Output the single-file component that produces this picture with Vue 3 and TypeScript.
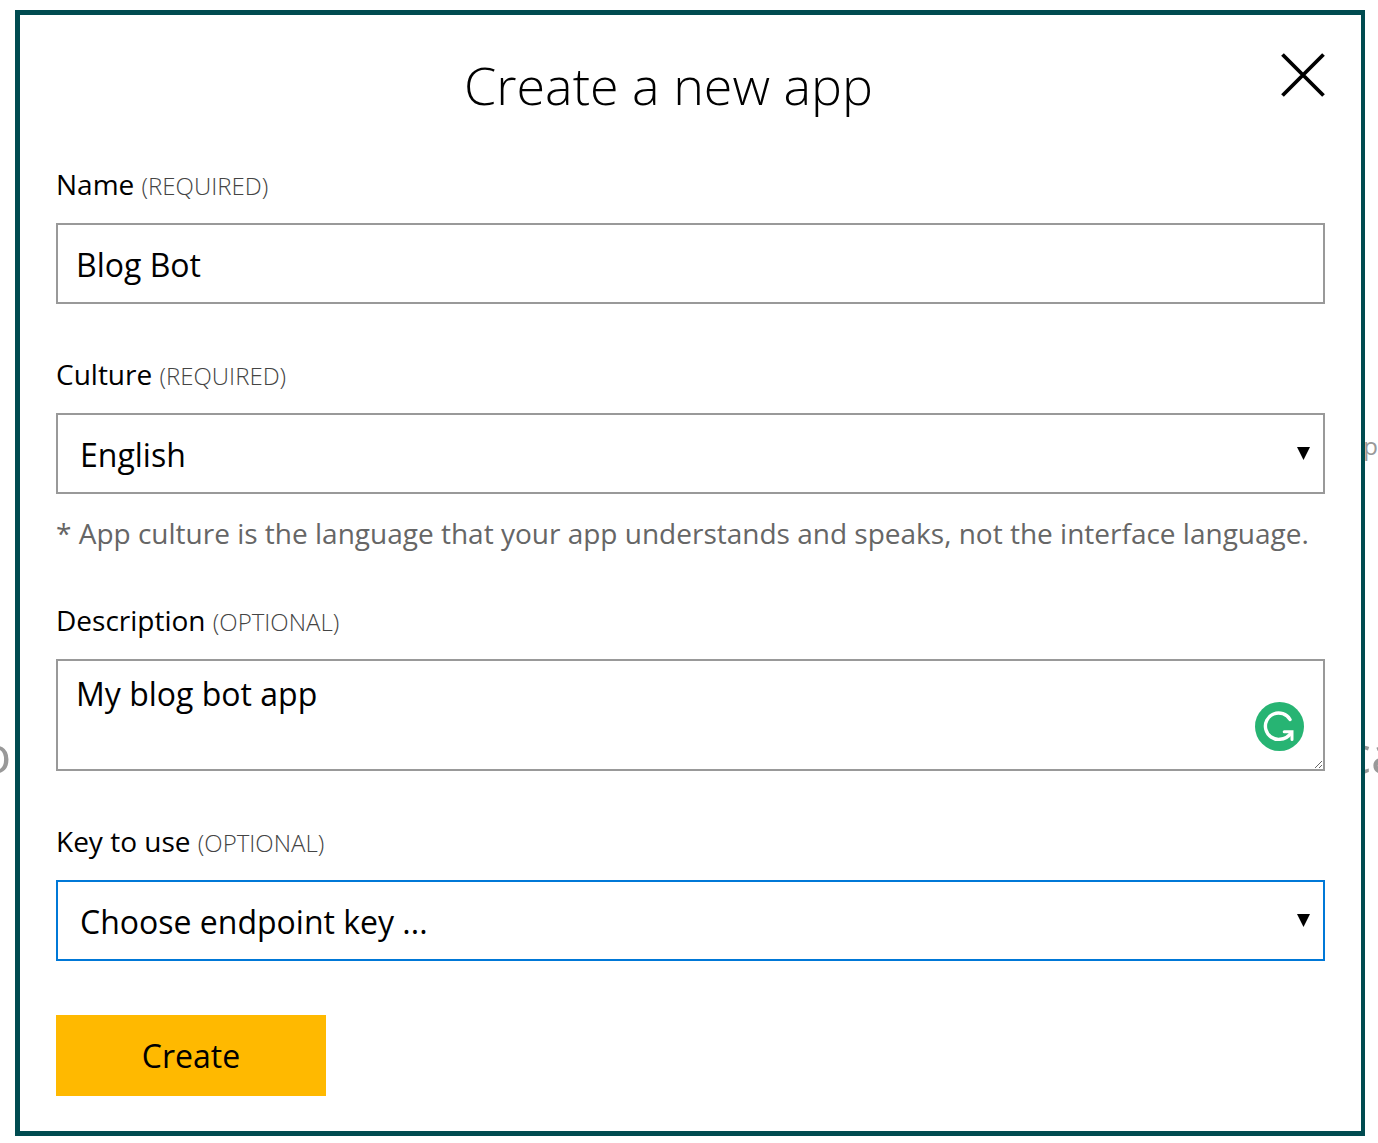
<script setup lang="ts">
import { ref } from 'vue'

const name = ref('Blog Bot')
const culture = ref('en')
const description = ref('My blog bot app')
const endpointKey = ref('')
</script>

<template>
  <div class="page">
    <div class="backdrop" aria-hidden="true">
      <span class="behind behind-column">p</span>
      <span class="behind behind-left">o</span>
      <span class="behind behind-right">ca</span>
    </div>

    <form class="dialog" role="dialog" aria-labelledby="dialog-title" @submit.prevent>
      <header class="header">
        <h1 id="dialog-title" class="title">Create a new app</h1>
        <button type="button" class="close" aria-label="Close">
          <svg viewBox="0 0 44 44" width="44" height="44">
            <path d="M1.500 1.500 42.500 42.500M42.500 1.500 1.500 42.500" stroke="#000" stroke-width="3.800" fill="none" />
          </svg>
        </button>
      </header>

      <div class="field">
        <label class="label" for="name">Name <small>(REQUIRED)</small></label>
        <input id="name" v-model="name" class="control" type="text" />
      </div>

      <div class="field with-note">
        <label class="label" for="culture">Culture <small>(REQUIRED)</small></label>
        <div class="select">
          <select id="culture" v-model="culture" class="control">
            <option value="en">English</option>
          </select>
          <svg class="arrow" viewBox="0 0 13 13" width="13" height="13"><path d="M0 0H13L6.500 13Z" /></svg>
        </div>
        <p class="note">* App culture is the language that your app understands and speaks, not the interface language.</p>
      </div>

      <div class="field">
        <label class="label" for="description">Description <small>(OPTIONAL)</small></label>
        <div class="area">
          <textarea id="description" v-model="description" class="control" spellcheck="false"></textarea>
          <svg class="checker" viewBox="0 0 49 49" width="49" height="49">
            <circle cx="24.500" cy="24.500" r="24.500" fill="#27b473" />
            <path d="M35 17.500A13.200 13.200 0 1 0 25 37.300Q32 37 36 31" fill="none" stroke="#fff" stroke-width="3.400" stroke-linecap="round" />
            <path d="M29.200 29.700H37V37.500" fill="none" stroke="#fff" stroke-width="3" stroke-linecap="round" />
          </svg>
        </div>
      </div>

      <div class="field">
        <label class="label" for="key">Key to use <small>(OPTIONAL)</small></label>
        <div class="select">
          <select id="key" v-model="endpointKey" class="control active">
            <option value="">Choose endpoint key ...</option>
          </select>
          <svg class="arrow" viewBox="0 0 13 13" width="13" height="13"><path d="M0 0H13L6.500 13Z" /></svg>
        </div>
      </div>

      <button type="submit" class="create">Create</button>
    </form>
  </div>
</template>

<style>
body {
  margin: 0;
  background: #fff;
}
</style>

<style scoped>
.page {
  position: relative;
  min-height: 100vh;
  box-sizing: border-box;
  padding: 10px 13px 7px 15px;
  overflow: hidden;
  font-family: "Open Sans", "Noto Sans", sans-serif;
  color: #000;
}

.backdrop {
  position: absolute;
  inset: 0;
  color: #999;
}

.behind {
  position: absolute;
  white-space: nowrap;
}

.behind-column {
  top: 430px;
  right: 0;
  font-size: 24px;
  line-height: 32px;
}

.behind-left {
  top: 718px;
  left: -20px;
  font-size: 52px;
  line-height: 70px;
}

.behind-right {
  top: 718px;
  left: calc(100% - 32px);
  font-size: 52px;
  line-height: 70px;
}

.dialog {
  position: relative;
  box-sizing: border-box;
  padding: 36px 36px 35px;
  border: 5px solid #004b50;
  border-right-width: 4px;
  background: #fff;
}

.header {
  display: flex;
  align-items: flex-start;
  margin-bottom: 46px;
}

.title {
  flex: 1;
  margin: 0;
  font-size: 52px;
  line-height: 68px;
  font-weight: 300;
  text-align: center;
}

.close {
  padding: 2px 0 0;
  border: 0;
  background: none;
}

.close svg {
  display: block;
}

.field {
  margin-bottom: 51px;
}

.with-note {
  margin-bottom: 48px;
}

.label {
  display: block;
  margin-bottom: 20px;
  font-size: 28px;
  line-height: 38px;
}

.label small {
  font-size: 24px;
  line-height: 24px;
  font-weight: 300;
  color: #444;
}

.control {
  display: block;
  box-sizing: border-box;
  width: 100%;
  height: 81px;
  margin: 0;
  padding: 2px 18px 0;
  border: 2px solid #999;
  border-radius: 0;
  outline: 0;
  background: #fff;
  color: #000;
  font-family: inherit;
  font-size: 32px;
  line-height: 44px;
}

.select,
.area {
  position: relative;
}

select.control {
  padding: 2px 22px 0;
  appearance: none;
}

.active {
  border-color: #0078d7;
}

.arrow {
  position: absolute;
  top: 34px;
  right: 15px;
  pointer-events: none;
}

textarea.control {
  height: 112px;
  padding: 11px 18px;
  resize: vertical;
}

.checker {
  position: absolute;
  right: 21px;
  bottom: 20px;
}

.note {
  margin: 19px 0 0;
  font-size: 28px;
  line-height: 40px;
  color: #666;
}

.create {
  display: block;
  width: 270px;
  height: 81px;
  margin-top: 54px;
  padding: 0;
  border: 0;
  background: #ffb900;
  color: #000;
  font-family: inherit;
  font-size: 32px;
}
</style>
